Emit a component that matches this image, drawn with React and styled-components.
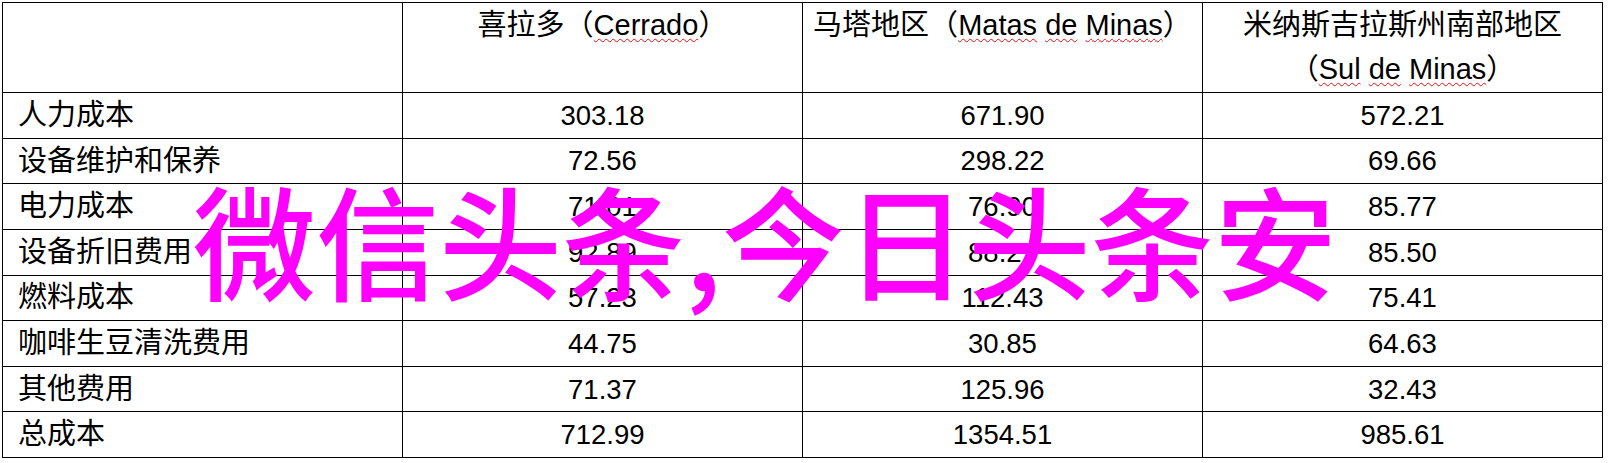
import React from "react";
import styled, { createGlobalStyle } from "styled-components";

const Global = createGlobalStyle`
  html, body { margin: 0; padding: 0; background: #fff; }
  body { width: 1608px; height: 463px; overflow: hidden; }
`;

const Page = styled.div`
  position: relative;
  width: 1608px;
  height: 463px;
  padding: 2px 0 0 2px;
  box-sizing: border-box;
`;

const Grid = styled.div`
  display: grid;
  grid-template-columns: repeat(4, 400px);
  grid-template-rows: 90px repeat(8, 45.625px);
  border-top: 1px solid #000;
  border-left: 1px solid #000;
  width: max-content;
  color: #000;
  font-family: "Liberation Sans", "Noto Sans CJK SC", sans-serif;
`;

const Cell = styled.div`
  box-sizing: border-box;
  border-right: 1px solid #000;
  border-bottom: 1px solid #000;
  display: flex;
  align-items: center;
  overflow: visible;
  white-space: nowrap;
`;

const HeadCell = styled(Cell)`
  flex-direction: column;
  align-items: center;
  justify-content: flex-start;
  font-size: 29px;
  line-height: 44px;
`;

const Label = styled(Cell)`
  font-size: 29px;
  line-height: 1.2;
  padding-left: 15px;
`;

const Num = styled(Cell)`
  justify-content: center;
  font-size: 27.5px;
  line-height: 1.2;
`;

const Line = styled.div`
  white-space: nowrap;
`;

const Spell = styled.span`
  text-decoration: underline wavy #e01010;
  text-decoration-thickness: 1px;
  text-underline-offset: 3px;
  text-decoration-skip-ink: none;
`;

const Watermark = styled.div`
  position: absolute;
  left: 193px;
  top: 176px;
  font-family: "Noto Sans CJK SC", sans-serif;
  font-weight: 500;
  font-size: 123px;
  line-height: 1;
  color: #ff00ff;
  white-space: nowrap;
  pointer-events: none;
`;

const rows = [
  ["人力成本", "303.18", "671.90", "572.21"],
  ["设备维护和保养", "72.56", "298.22", "69.66"],
  ["电力成本", "71.01", "76.90", "85.77"],
  ["设备折旧费用", "92.89", "88.27", "85.50"],
  ["燃料成本", "57.23", "112.43", "75.41"],
  ["咖啡生豆清洗费用", "44.75", "30.85", "64.63"],
  ["其他费用", "71.37", "125.96", "32.43"],
  ["总成本", "712.99", "1354.51", "985.61"],
];

export default function App() {
  return (
    <Page>
      <Global />
      <Grid>
        <HeadCell />
        <HeadCell>
          <Line>
            喜拉多（<Spell>Cerrado</Spell>）
          </Line>
        </HeadCell>
        <HeadCell>
          <Line>
            马塔地区（<Spell>Matas</Spell> <Spell>de</Spell>{" "}
            <Spell>Minas</Spell>）
          </Line>
        </HeadCell>
        <HeadCell>
          <Line>米纳斯吉拉斯州南部地区</Line>
          <Line>
            （<Spell>Sul</Spell> <Spell>de</Spell> <Spell>Minas</Spell>）
          </Line>
        </HeadCell>
        {rows.map((r) => (
          <React.Fragment key={r[0]}>
            <Label>{r[0]}</Label>
            <Num>{r[1]}</Num>
            <Num>{r[2]}</Num>
            <Num>{r[3]}</Num>
          </React.Fragment>
        ))}
      </Grid>
      <Watermark>微信头条,今日头条安</Watermark>
    </Page>
  );
}
